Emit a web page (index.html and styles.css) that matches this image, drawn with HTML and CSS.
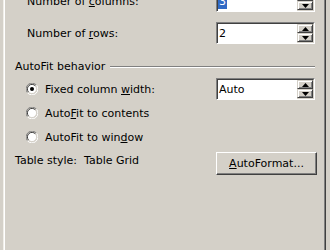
FILE: index.html
```html
<!DOCTYPE html>
<html>
<head>
<meta charset="utf-8">
<link rel="stylesheet" href="styles.css">
</head>
<body>
<div class="panel">
  <div class="row first">
    <span class="label ind">Number of <u>c</u>olumns:</span>
    <div class="spin">
      <div class="field"><span class="sel">3</span></div>
      <div class="btns">
        <span class="sb"><svg width="7" height="4" viewBox="0 0 7 4"><polygon points="3.5,0 7,4 0,4" fill="#000"/></svg></span>
        <span class="sb"><svg width="7" height="4" viewBox="0 0 7 4"><polygon points="0,0 7,0 3.5,4" fill="#000"/></svg></span>
      </div>
    </div>
  </div>
  <div class="row second">
    <span class="label ind">Number of <u>r</u>ows:</span>
    <div class="spin">
      <div class="field">2</div>
      <div class="btns">
        <span class="sb"><svg width="7" height="4" viewBox="0 0 7 4"><polygon points="3.5,0 7,4 0,4" fill="#000"/></svg></span>
        <span class="sb"><svg width="7" height="4" viewBox="0 0 7 4"><polygon points="0,0 7,0 3.5,4" fill="#000"/></svg></span>
      </div>
    </div>
  </div>
  <div class="group">
    <span class="label">AutoFit behavior</span>
    <span class="etch"></span>
  </div>
  <div class="row fixed">
    <span class="radio-line">
      <svg class="radio" width="12" height="12" viewBox="0 0 12 12">
        <path d="M10.5 2.2 A5.6 5.6 0 0 0 1.5 9.8" fill="none" stroke="#808080" stroke-width="1"/>
        <path d="M1.5 9.8 A5.6 5.6 0 0 0 10.5 2.2" fill="none" stroke="#ffffff" stroke-width="1"/>
        <circle cx="6" cy="6" r="4.6" fill="#fff"/>
        <path d="M9.4 2.9 A4.5 4.5 0 0 0 2.6 9.1" fill="none" stroke="#404040" stroke-width="1"/>
        <path d="M2.6 9.1 A4.5 4.5 0 0 0 9.4 2.9" fill="none" stroke="#d4d0c8" stroke-width="1"/>
        <circle cx="6" cy="6" r="2" fill="#000"/>
      </svg>
      <span class="label">Fixed column <u>w</u>idth:</span>
    </span>
    <div class="spin">
      <div class="field">Auto</div>
      <div class="btns">
        <span class="sb"><svg width="7" height="4" viewBox="0 0 7 4"><polygon points="3.5,0 7,4 0,4" fill="#000"/></svg></span>
        <span class="sb"><svg width="7" height="4" viewBox="0 0 7 4"><polygon points="0,0 7,0 3.5,4" fill="#000"/></svg></span>
      </div>
    </div>
  </div>
  <div class="row contents">
    <span class="radio-line">
      <svg class="radio" width="12" height="12" viewBox="0 0 12 12">
        <path d="M10.5 2.2 A5.6 5.6 0 0 0 1.5 9.8" fill="none" stroke="#808080" stroke-width="1"/>
        <path d="M1.5 9.8 A5.6 5.6 0 0 0 10.5 2.2" fill="none" stroke="#ffffff" stroke-width="1"/>
        <circle cx="6" cy="6" r="4.6" fill="#fff"/>
        <path d="M9.4 2.9 A4.5 4.5 0 0 0 2.6 9.1" fill="none" stroke="#404040" stroke-width="1"/>
        <path d="M2.6 9.1 A4.5 4.5 0 0 0 9.4 2.9" fill="none" stroke="#d4d0c8" stroke-width="1"/>
      </svg>
      <span class="label">Auto<u>F</u>it to contents</span>
    </span>
  </div>
  <div class="row window">
    <span class="radio-line">
      <svg class="radio" width="12" height="12" viewBox="0 0 12 12">
        <path d="M10.5 2.2 A5.6 5.6 0 0 0 1.5 9.8" fill="none" stroke="#808080" stroke-width="1"/>
        <path d="M1.5 9.8 A5.6 5.6 0 0 0 10.5 2.2" fill="none" stroke="#ffffff" stroke-width="1"/>
        <circle cx="6" cy="6" r="4.6" fill="#fff"/>
        <path d="M9.4 2.9 A4.5 4.5 0 0 0 2.6 9.1" fill="none" stroke="#404040" stroke-width="1"/>
        <path d="M2.6 9.1 A4.5 4.5 0 0 0 9.4 2.9" fill="none" stroke="#d4d0c8" stroke-width="1"/>
      </svg>
      <span class="label">AutoFit to win<u>d</u>ow</span>
    </span>
  </div>
  <div class="row tstyle">
    <span class="label tlabel">Table style:&nbsp; Table Grid</span>
    <button class="btn"><u>A</u>utoFormat...</button>
  </div>
</div>
</body>
</html>
```

FILE: styles.css
```css
html, body {
  margin: 0;
  padding: 0;
  background: #d4d0c8;
  height: 250px;
  overflow: hidden;
}

body {
  font-family: "DejaVu Sans", sans-serif;
  font-size: 11px;
  color: #000;
}

u {
  text-decoration: underline;
  text-underline-offset: 1px;
}

.panel {
  margin-left: 3px;
  width: 321px;
  height: 260px;
  border-left: 1px solid #f1efe9;
  border-right: 1px solid #404040;
  box-shadow: inset 1px 0 #ffffff, inset -1px 0 #808080;
  padding: 0 10px 0 11px;
  box-sizing: border-box;
  width: 323px;
  overflow: hidden;
}

.row {
  display: flex;
  align-items: center;
  justify-content: space-between;
  height: 22px;
}

.label {
  line-height: 13px;
  white-space: nowrap;
}

.ind {
  margin-left: 12px;
}

.first { margin-top: -10px; }
.second { margin-top: 10px; }

.group {
  display: flex;
  align-items: center;
  height: 13px;
  margin-top: 16px;
}

.etch {
  flex: 1;
  height: 0;
  border-top: 1px solid #808080;
  border-bottom: 1px solid #ffffff;
  margin-left: 5px;
}

.fixed { margin-top: 5px; }
.contents { margin-top: 2px; }
.window { margin-top: 2px; }

.radio-line {
  display: flex;
  align-items: center;
  margin-left: 11px;
}

.radio {
  display: block;
  margin-right: 7px;
}

.spin {
  width: 99px;
  height: 22px;
  box-sizing: border-box;
  border-top: 1px solid #808080;
  border-left: 1px solid #808080;
  border-right: 1px solid #ffffff;
  border-bottom: 1px solid #ffffff;
  background: #fff;
  display: flex;
}

.field {
  flex: 1;
  border-top: 1px solid #404040;
  border-left: 1px solid #404040;
  line-height: 19px;
  padding-left: 1px;
  white-space: nowrap;
  overflow: hidden;
}

.sel {
  background: #316ac5;
  color: #fff;
  padding: 1px 1px;
  margin-left: -1px;
}

.btns {
  width: 16px;
  display: flex;
  flex-direction: column;
  border-top: 1px solid #404040;
  border-right: 1px solid #d4d0c8;
  border-bottom: 1px solid #d4d0c8;
}

.sb {
  flex: 1;
  display: flex;
  align-items: center;
  justify-content: center;
  background: #d4d0c8;
  border-top: 1px solid #d4d0c8;
  border-left: 1px solid #d4d0c8;
  border-right: 1px solid #404040;
  border-bottom: 1px solid #404040;
  box-shadow: inset 1px 1px #ffffff, inset -1px -1px #808080;
}

.tstyle {
  margin-top: 4px;
  align-items: flex-start;
  height: 23px;
}

.tlabel {
  margin-top: 2px;
}

.btn {
  width: 101px;
  height: 23px;
  margin-right: -2px;
  padding: 0;
  font-family: "DejaVu Sans", sans-serif;
  font-size: 11px;
  color: #000;
  background: #d4d0c8;
  border-top: 1px solid #ffffff;
  border-left: 1px solid #ffffff;
  border-right: 1px solid #404040;
  border-bottom: 1px solid #404040;
  box-shadow: inset -1px -1px #808080;
}
```
